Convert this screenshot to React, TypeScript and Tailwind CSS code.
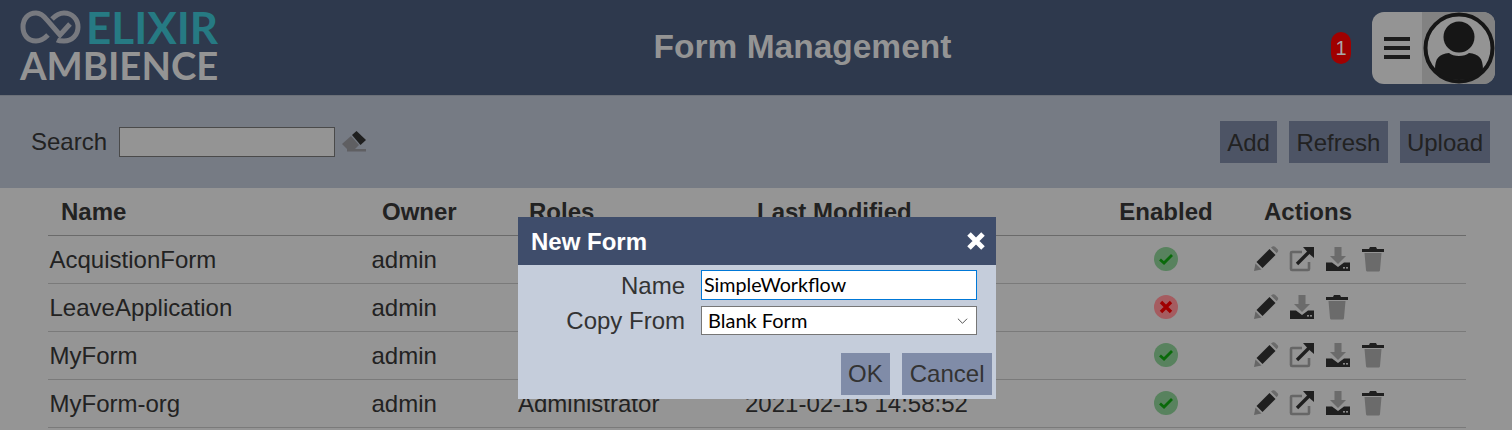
const rows = [
  { name: 'AcquistionForm', owner: 'admin', roles: '', modified: '', enabled: true, link: true },
  { name: 'LeaveApplication', owner: 'admin', roles: '', modified: '', enabled: false, link: false },
  { name: 'MyForm', owner: 'admin', roles: '', modified: '', enabled: true, link: true },
  { name: 'MyForm-org', owner: 'admin', roles: 'Administrator', modified: '2021-02-15 14:58:52', enabled: true, link: true },
];

function Logo() {
  return (
    <div className="flex w-[200px] flex-col pb-1 font-['Lato',sans-serif] font-bold">
      <div className="flex h-[36px] items-center">
        <svg viewBox="0 0 62 36" className="h-[36px] w-[62px] shrink-0" fill="none" stroke="#77797f" strokeWidth="5">
          <path d="M28 26 C24 30 20 32 16 32 C8 32 3 26 3 18 C3 10 8 4 16 4 C21 4 24 7 27 11 L40 26 L50 15" />
          <path d="M32 10 C35 7 39 4 44 4 C52 4 58 10 58 18 C58 26 52 32 44 32 C41 32 39 32 37 31" />
        </svg>
        <span className="ml-1 text-[44px] leading-[36px] text-[#267a83]">ELIXIR</span>
      </div>
      <span className="mt-[2px] text-[38.3px] leading-[36px] text-[#949494]">AMBIENCE</span>
    </div>
  );
}

function Pencil() {
  return (
    <svg viewBox="0 0 26 26" className="h-[26px] w-[26px]">
      <path d="M1 25 L2.5 17.5 L8.5 23.5 Z" fill="#666" />
      <path d="M3.5 16 L16.5 3 L22.5 9 L9.5 22 Z" fill="#1f1f1f" />
      <path d="M18 1.5 L19.5 0.5 C20.5 0 21.5 0.3 22 0.8 L24.8 3.6 C25.3 4.2 25.3 5.2 24.8 5.8 L23.7 7.2 Z" fill="#6b6b6b" />
    </svg>
  );
}

function ExternalLink() {
  return (
    <svg viewBox="0 0 26 26" className="h-[26px] w-[26px]" fill="none">
      <path d="M13 6 H3 A1 1 0 0 0 2 7 V23 A1 1 0 0 0 3 24 H19 A1 1 0 0 0 20 23 V16" stroke="#666" strokeWidth="2.6" />
      <path d="M8 18 L21 5" stroke="#1f1f1f" strokeWidth="3.4" />
      <path d="M14 1 H25 V12 L21 8.5 L17.5 5 Z" fill="#1f1f1f" />
    </svg>
  );
}

function Download() {
  return (
    <svg viewBox="0 0 26 26" className="h-[26px] w-[26px]">
      <path d="M9.5 1 H16.5 V10 H21 L13 18 L5 10 H9.5 Z" fill="#6b6b6b" />
      <path d="M1 16.5 H7 L13 21 L19 16.5 H25 V25 H1 Z" fill="#1f1f1f" />
      <rect x="18" y="21" width="2" height="1.6" fill="#888" />
      <rect x="21" y="21" width="2" height="1.6" fill="#888" />
    </svg>
  );
}

function Trash() {
  return (
    <svg viewBox="0 0 24 26" className="h-[26px] w-[24px]">
      <path d="M1 3 H8 L9 1 H15 L16 3 H23 V6 H1 Z" fill="#1f1f1f" />
      <path d="M3.5 7 H20.5 L19 24 C19 25 18 25.5 17.5 25.5 H6.5 C6 25.5 5 25 5 24 Z" fill="#6b6b6b" />
    </svg>
  );
}

function StatusIcon({ enabled }: { enabled: boolean }) {
  return (
    <span
      className={`flex h-6 w-6 items-center justify-center rounded-full ${enabled ? 'bg-[#58825e]' : 'bg-[#a55c60]'}`}
    >
      {enabled ? (
        <svg viewBox="0 0 16 16" className="h-4 w-4" fill="none" stroke="#0a6a0a" strokeWidth="2.8">
          <path d="M2 8.5 L6 12 L14 4" />
        </svg>
      ) : (
        <svg viewBox="0 0 16 16" className="h-4 w-4" fill="none" stroke="#a00000" strokeWidth="3.4">
          <path d="M3 3 L13 13 M13 3 L3 13" />
        </svg>
      )}
    </span>
  );
}

export default function App() {
  return (
    <div className="relative h-[430px] w-[1512px] overflow-hidden bg-[#959595] font-['Liberation_Sans',Arial,sans-serif] text-[#222222]">
      <header className="flex h-[96px] items-center border-b border-[#6b7078] bg-[#2e394d] pl-5 pr-[17px]">
        <Logo />
        <h1 className="flex-1 pl-[54px] text-center text-[33.5px] font-bold text-[#949494]">Form Management</h1>
        <span className="mr-[21px] flex h-8 w-5 items-center justify-center rounded-[10px] bg-[#a00000] text-xl text-[#a9a9a9]">1</span>
        <div className="flex h-[72px] w-[123px] overflow-hidden rounded-xl bg-[#949494]">
          <div className="flex w-[50px] flex-col items-center justify-center gap-[5px]">
            <span className="h-1 w-[26px] bg-[#1c1c1c]" />
            <span className="h-1 w-[26px] bg-[#1c1c1c]" />
            <span className="h-1 w-[26px] bg-[#1c1c1c]" />
          </div>
          <div className="flex flex-1 items-center justify-center bg-[#828282]">
            <svg viewBox="0 0 72 72" className="h-[72px] w-[72px]">
              <circle cx="36" cy="36" r="33.5" fill="#949494" stroke="#161616" strokeWidth="4" />
              <circle cx="36" cy="25" r="15.5" fill="#161616" />
              <path d="M12 58 C12 46 16 42 26 41 C30 45 42 45 46 41 C56 42 60 46 60 58 C54 65 46 68 36 68 C26 68 18 65 12 58 Z" fill="#161616" />
            </svg>
          </div>
        </div>
      </header>

      <div className="flex h-[92px] items-center justify-between bg-[#767b84] pl-[31px] pr-[22px]">
        <div className="flex items-center">
          <label className="text-2xl">Search</label>
          <span className="ml-3 h-[30px] w-[216px] border border-[#4a4a4a] bg-[#949494]" />
          <svg viewBox="0 0 26 24" className="ml-[6px] h-6 w-[26px]">
            <path d="M1 14 L10 6 L18 15 L14 19 H6 Z" fill="#5f5f62" />
            <path d="M11 5 L15.5 1 L25 10 L19.5 15 Z" fill="#1f1f1f" />
            <rect x="6" y="19" width="19" height="2.5" fill="#5f5f62" />
          </svg>
        </div>
        <div className="flex gap-3">
          <span className="flex h-[42px] items-center bg-[#4d5465] px-[7px] pt-[2px] text-2xl">Add</span>
          <span className="flex h-[42px] items-center bg-[#4d5465] px-[7.5px] pt-[2px] text-2xl">Refresh</span>
          <span className="flex h-[42px] items-center bg-[#4d5465] px-[7px] pt-[2px] text-2xl">Upload</span>
        </div>
      </div>

      <table className="ml-[48px] w-[1418px] table-fixed border-collapse text-2xl">
        <thead>
          <tr className="h-[47px] border-b border-[#6a6a6a] text-left font-bold">
            <th className="w-[322px] pl-[13px] pt-[2px]">Name</th>
            <th className="w-[148px] pl-[12px] pt-[2px]">Owner</th>
            <th className="w-[227px] pl-[11px] pt-[2px]">Roles</th>
            <th className="w-[356px] pl-[12px] pt-[2px]">Last Modified</th>
            <th className="w-[130px] pt-[2px] text-center">Enabled</th>
            <th className="pl-[33px] pt-[2px]">Actions</th>
          </tr>
        </thead>
        <tbody>
          {rows.map((row) => (
            <tr key={row.name} className="h-[48px] border-b border-[#7a7a7a]">
              <td className="pl-[1.5px] pt-[2px]">{row.name}</td>
              <td className="pl-[1.5px] pt-[2px]">{row.owner}</td>
              <td className="pt-[2px]">{row.roles}</td>
              <td className="pt-[2px]">{row.modified}</td>
              <td>
                <div className="flex justify-center">
                  <StatusIcon enabled={row.enabled} />
                </div>
              </td>
              <td className="pl-[22px]">
                <div className="flex items-center gap-[10px]">
                  <Pencil />
                  {row.link && <ExternalLink />}
                  <Download />
                  <Trash />
                </div>
              </td>
            </tr>
          ))}
        </tbody>
      </table>

      <div className="absolute left-[518px] top-[217px] w-[478px] bg-[#c5cddb]">
        <div className="flex h-[48px] items-center justify-between bg-[#3f4d6b] pl-[13px] pr-[10px] text-2xl font-bold text-white">
          <span className="pt-[2px]">New Form</span>
          <svg viewBox="0 0 20 20" className="h-5 w-5" fill="none" stroke="#ffffff" strokeWidth="5">
            <path d="M3 3 L17 17 M17 3 L3 17" />
          </svg>
        </div>
        <div className="grid grid-cols-[167px_276px] items-center gap-x-[16px] gap-y-[6px] pt-[5px] text-2xl leading-[29px] text-[#333333]">
          <label className="text-right">Name</label>
          <input
            readOnly
            value="SimpleWorkflow"
            className="h-[30px] w-[276px] border border-[#0078d7] bg-white px-[2px] pb-[1px] font-['Lato',sans-serif] text-[19.7px] text-black outline-none"
          />
          <label className="text-right">Copy From</label>
          <div className="flex h-[29px] w-[276px] items-center justify-between border border-[#767676] bg-white pl-[6px] pr-[8px] font-['Lato',sans-serif] text-[20px] text-black">
            <span>Blank Form</span>
            <svg viewBox="0 0 12 8" className="h-2 w-[11px]" fill="none" stroke="#444" strokeWidth="1">
              <path d="M1 1.5 L6 6.5 L11 1.5" />
            </svg>
          </div>
        </div>
        <div className="flex justify-end gap-3 pb-1 pr-1 pt-[18px] text-2xl text-[#333333]">
          <span className="flex h-[42px] items-center bg-[#808ca8] px-[7.5px]">OK</span>
          <span className="flex h-[42px] items-center bg-[#808ca8] px-[7.5px]">Cancel</span>
        </div>
      </div>
    </div>
  );
}
